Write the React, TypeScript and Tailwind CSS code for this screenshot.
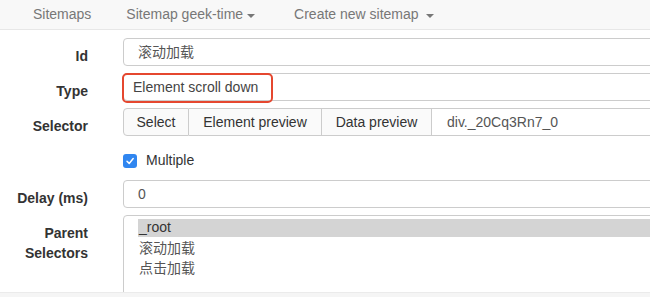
import React from "react";

const font = { fontFamily: '"Liberation Sans", Arial, "Noto Sans CJK SC", sans-serif' };

function Caret() {
  return (
    <span className="inline-block w-0 h-0 ml-[4px] border-l-[4px] border-r-[4px] border-t-[4px] border-l-transparent border-r-transparent border-t-[#777] align-middle relative top-[1px]" />
  );
}

function Label({ children }: { children: React.ReactNode }) {
  return (
    <div className="w-[88px] h-[28px] shrink-0 text-right font-bold text-[14px] leading-[19px] text-[#333] pt-[9px]">
      {children}
    </div>
  );
}

export default function App() {
  return (
    <div className="w-[650px] h-[297px] overflow-hidden bg-white flex flex-col" style={font}>
      <div className="h-[30px] shrink-0 bg-[#f8f8f8] border-b border-[#e7e7e7] flex items-center text-[14px] text-[#777]">
        <span className="ml-[33px]">Sitemaps</span>
        <span className="ml-[35px] flex items-center">
          Sitemap geek-time
          <Caret />
        </span>
        <span className="ml-[39px] flex items-center">
          Create new sitemap
          <span className="ml-[3px] flex items-center">
            <Caret />
          </span>
        </span>
      </div>

      <div className="flex-1 overflow-hidden pt-[8px] text-[14px]">
        {/* Id */}
        <div className="flex gap-[35px] h-[28px]">
          <Label>Id</Label>
          <div className="w-[600px] h-[28px] shrink-0 border border-[#ccc] rounded-[4px] flex items-center pl-[14px] text-[#555]">
            滚动加载
          </div>
        </div>

        {/* Type */}
        <div className="flex gap-[35px] mt-[7px] h-[28px]">
          <Label>Type</Label>
          <div className="relative w-[600px] h-[28px] shrink-0 border border-[#ccc] rounded-[4px] flex items-center pl-[9px] text-[#444]">
            Element scroll down
            <div className="absolute left-[-2px] top-[-1px] w-[151px] h-[30px] border-2 border-[#e5472f] rounded-[5px]" />
          </div>
        </div>

        {/* Selector */}
        <div className="flex gap-[35px] mt-[7px] h-[28px]">
          <Label>Selector</Label>
          <div className="flex h-[28px] shrink-0 text-[#333]">
            <div className="w-[66px] border border-[#ccc] rounded-l-[4px] bg-[#fafafa] flex items-center justify-center">
              Select
            </div>
            <div className="w-[133px] border border-l-0 border-[#ccc] bg-[#fafafa] flex items-center justify-center">
              Element preview
            </div>
            <div className="w-[110px] border border-l-0 border-[#ccc] bg-[#fafafa] flex items-center justify-center">
              Data preview
            </div>
            <div className="w-[300px] border border-l-0 border-[#ccc] bg-white flex items-center pl-[15px] text-[#555]">
              div._20Cq3Rn7_0
            </div>
          </div>
        </div>

        {/* Multiple */}
        <div className="flex gap-[35px] mt-[14px] h-[20px] items-center">
          <div className="w-[88px] shrink-0" />
          <div className="flex items-center">
            <div className="w-[14px] h-[14px] rounded-[3px] bg-[#3086f0] flex items-center justify-center relative top-[1px]">
              <svg width="10" height="10" viewBox="0 0 10 10">
                <path d="M2 5.2 L4.2 7.4 L8.2 2.6" fill="none" stroke="#fff" strokeWidth="1.5" strokeLinecap="round" strokeLinejoin="round" />
              </svg>
            </div>
            <span className="ml-[9px] text-[#333]">Multiple</span>
          </div>
        </div>

        {/* Delay */}
        <div className="flex gap-[35px] mt-[10px] h-[28px]">
          <Label>Delay (ms)</Label>
          <div className="w-[600px] h-[28px] shrink-0 border border-[#ccc] rounded-[4px] flex items-center pl-[14px] text-[#555]">
            0
          </div>
        </div>

        {/* Parent Selectors */}
        <div className="flex gap-[35px] mt-[7px]">
          <div className="w-[88px] shrink-0 text-right font-bold text-[14px] leading-[20px] text-[#333] pt-[8px]">
            Parent
            <br />
            Selectors
          </div>
          <div className="w-[600px] h-[100px] shrink-0 border border-[#ccc] rounded-[4px] pt-[3px] pl-[14px] text-[#555] leading-[20px]">
            <div className="bg-[#d4d4d4] pl-[1px] text-[#333] h-[18px] leading-[17px]">_root</div>
            <div className="pl-[1px] mt-[1px]">滚动加载</div>
            <div className="pl-[1px]">点击加载</div>
          </div>
        </div>
      </div>

      <div className="h-[5px] shrink-0 bg-[#f5f5f5] border-t border-[#ebebeb]" />
    </div>
  );
}
